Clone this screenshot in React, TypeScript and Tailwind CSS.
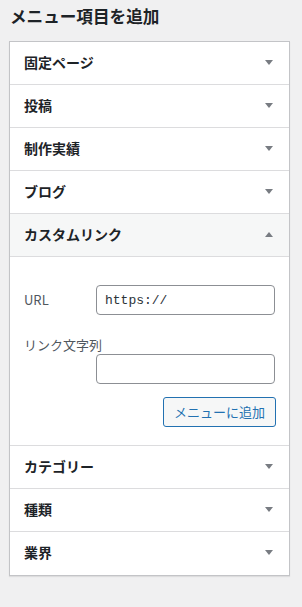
import { useState } from 'react';

const font = { fontFamily: '"Noto Sans CJK JP", "Noto Sans", sans-serif' };

const topSections = ['固定ページ', '投稿', '制作実績', 'ブログ'];
const bottomSections = ['カテゴリー', '種類', '業界'];

function Arrow({ up }: { up?: boolean }) {
  return (
    <svg width="8" height="5" viewBox="0 0 8 5" className="shrink-0">
      {up ? <path d="M0 5 L4 0 L8 5 Z" fill="#787c82" /> : <path d="M0 0 L8 0 L4 5 Z" fill="#787c82" />}
    </svg>
  );
}

function SectionRow({ title, open, last }: { title: string; open?: boolean; last?: boolean }) {
  return (
    <button
      className={`flex h-[43px] w-full items-center justify-between pb-[2px] pl-[14px] pr-[16px] text-left ${last ? '' : 'border-b border-[#dcdcde]'} ${open ? 'bg-[#f6f7f7]' : 'bg-white'}`}
    >
      <span className="text-[14px] font-semibold leading-[21px] text-[#1d2327]">{title}</span>
      <Arrow up={open} />
    </button>
  );
}

export default function App() {
  const [url, setUrl] = useState('https://');
  const [text, setText] = useState('');

  return (
    <div className="min-h-[607px] w-[302px] bg-[#f0f0f1] px-[9px] pt-[3px]" style={font}>
      <h2 className="mb-[12px] pl-[1px] text-[16.6px] font-semibold leading-[26px] text-[#1d2327]">メニュー項目を追加</h2>

      <div className="w-[281px] border border-[#c3c4c7] bg-white shadow-[0_1px_1px_rgba(0,0,0,0.08)]">
        {topSections.map(s => (
          <SectionRow key={s} title={s} />
        ))}
        <SectionRow title="カスタムリンク" open />

        <div className="border-b border-[#dcdcde] pb-[18px] pl-[14px] pr-[13px] pt-[28px]">
          <div className="flex items-center pr-[1px]">
            <label className="w-[72px] text-[13px] text-[#50575e]">URL</label>
            <input
              value={url}
              onChange={e => setUrl(e.target.value)}
              className="h-[30px] w-[179px] rounded-[4px] border border-[#8c8f94] px-[8px] text-[13px] text-[#2c3338] outline-none"
              style={{ fontFamily: '"Liberation Mono", monospace' }}
            />
          </div>
          <label className="mt-[20px] block text-[13px] leading-[19px] text-[#50575e]">リンク文字列</label>
          <div className="flex justify-end pr-[1px]">
            <input
              value={text}
              onChange={e => setText(e.target.value)}
              className="h-[30px] w-[179px] rounded-[4px] border border-[#8c8f94] px-[8px] text-[13px] outline-none"
            />
          </div>
          <div className="mt-[13px] flex justify-end">
            <button className="h-[30px] w-[113px] rounded-[3px] border border-[#2271b1] bg-[#f6f7f7] text-[13px] text-[#2271b1]">
              メニューに追加
            </button>
          </div>
        </div>

        {bottomSections.map((s, i) => (
          <SectionRow key={s} title={s} last={i === bottomSections.length - 1} />
        ))}
      </div>
    </div>
  );
}
